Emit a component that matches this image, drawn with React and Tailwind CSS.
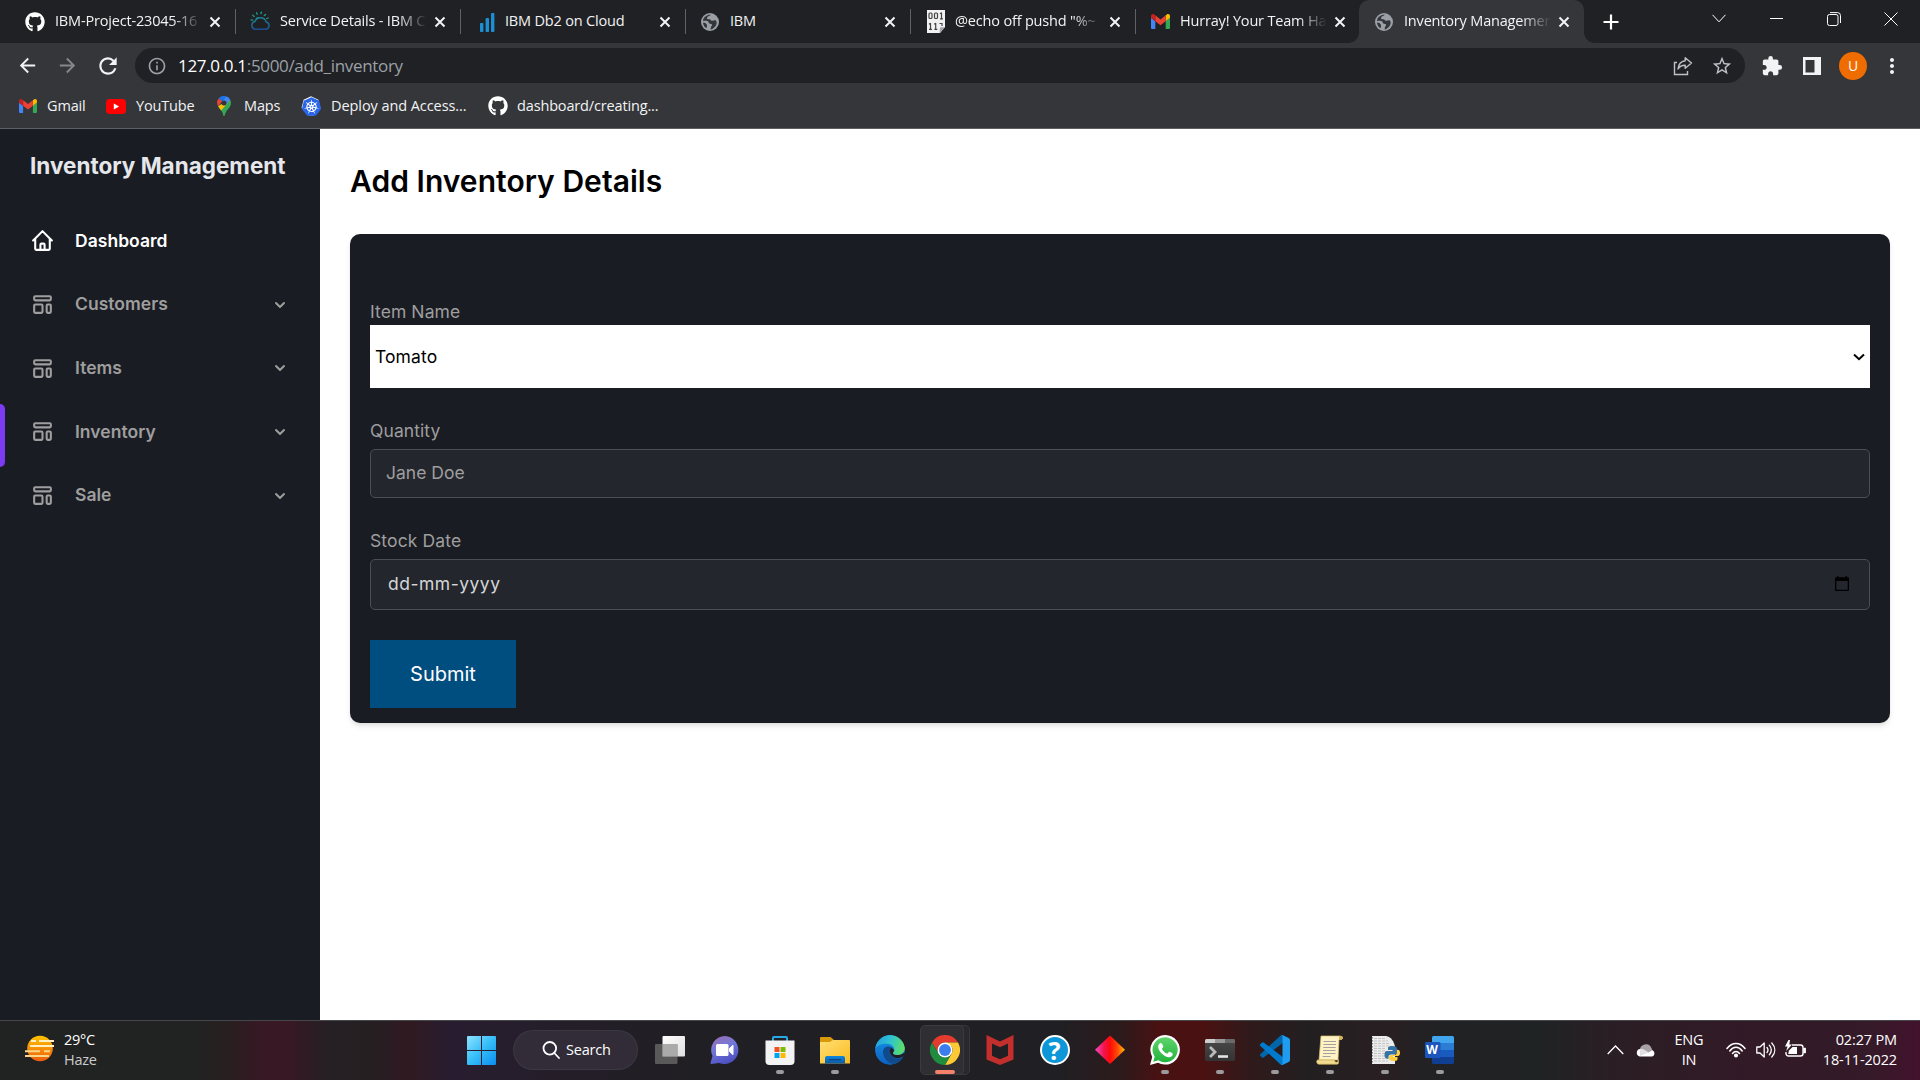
import React from "react";
import { FaGithub } from "react-icons/fa";
import { SiKubernetes } from "react-icons/si";
import { MdArrowBack, MdArrowForward, MdRefresh, MdInfoOutline, MdStarBorder, MdExtension, MdMoreVert } from "react-icons/md";

/* ---------- favicons and brand marks ---------- */

const GmailIcon = ({ className = "h-[19px] w-[19px]" }) => (
  <svg viewBox="52 42 88 66" className={className} preserveAspectRatio="none">
    <path fill="#4285f4" d="M58 108h14V74L52 59v43c0 3.32 2.69 6 6 6" />
    <path fill="#34a853" d="M120 108h14c3.32 0 6-2.69 6-6V59l-20 15" />
    <path fill="#fbbc04" d="M120 48v26l20-15v-8c0-7.42-8.47-11.65-14.4-7.2" />
    <path fill="#ea4335" d="M72 74V48l24 18 24-18v26L96 92" />
    <path fill="#c5221f" d="M52 51v8l20 15V48l-5.6-4.2c-5.94-4.45-14.4-.22-14.4 7.2" />
  </svg>
);

const CloudIcon = () => (
  <svg viewBox="0 0 20 22" className="h-[22px] w-5" fill="none">
    <defs>
      <linearGradient id="cloudLine" x1="0" y1="8" x2="0" y2="20" gradientUnits="userSpaceOnUse">
        <stop offset="0" stopColor="#1c7f90" />
        <stop offset="1" stopColor="#1c4690" />
      </linearGradient>
    </defs>
    <path d="M4.800 18.200h10.600a3.700 3.700 0 0 0 .8-7.300A6 6 0 0 0 5 10.400a4 4 0 0 0-.2 7.800Z" stroke="url(#cloudLine)" strokeWidth="1.500" />
    <path d="M5.900 8.200a3.900 3.900 0 0 1 2-2" stroke="#1b8f90" strokeWidth="1.100" />
    <path d="M1 8.800l1.700.3M2.800 4.300l1.300 1.200M6.600 1.600l.5 1.700M11.400 1l-.5 1.700M15.600 3.400l-1.300 1.200M18.200 7l-1.600.5" stroke="#1f9c8c" strokeWidth="1.300" strokeLinecap="round" />
  </svg>
);

const BarsIcon = () => (
  <svg viewBox="0 0 20 22" className="h-[22px] w-5">
    <g fill="#1c8fd3">
      <rect x="5" y="12" width="3.4" height="9" rx=".8" />
      <rect x="10.6" y="7" width="3.4" height="14" rx=".8" />
      <rect x="16" y="2" width="3.4" height="19" rx=".8" />
    </g>
  </svg>
);

const GlobeIcon = () => (
  <svg viewBox="0 0 20 20" className="h-5 w-5">
    <circle cx="10" cy="10" r="9" fill="#9aa0a6" />
    <path fill="#33363a" d="M11 2.8c-1.2 1.4-3.8 1.3-4 3.1-.1 1.3 1.4 1.4 2.7 1.3.9 0 1 1.4 2.2 1.5 1.7.2 3.3-1 4.3.2 1 1.3.3 4.2-1 5.5-1.4 1.4-2.8 3-4.6 3 .4-1.4 0-2.5 1-3.4.9-.9.6-2.1-.6-2.1-1.7 0-2.3-.9-2.6-2.2C8 8.600 5 9.400 3 8.800 3.300 5 7 2.500 11 2.800Z" />
    <path fill="#33363a" d="M3 10.600c2.200.3 3.900 1 4 3 .1 1-.3 2-.6 2.700C4.500 15.300 3.200 13 3 10.600Z" />
  </svg>
);

const BinaryIcon = () => (
  <svg viewBox="0 0 18 23" className="ml-px h-[23px] w-[18px]">
    <path fill="#f1f1f1" d="M0 0h18v17l-5 6H0Z" />
    <path fill="#9fa3a8" d="m12.500 23 .5-5.500 5-.5Z" />
    <g fill="none" stroke="#444" strokeWidth="1.200">
      <rect x="2" y="3" width="3" height="5.500" rx="1" />
      <rect x="7.500" y="3" width="3" height="5.500" rx="1" />
      <path d="M14.500 2.500V9M13 3.800l1.500-1M13 8.800h3M3.500 13v6.500M2 14.300l1.500-1M2 19.400h3M8.700 13v6.500M7.300 14.300l1.400-1M7.300 19.400h3M12.500 13.500h2.500v2.500" />
    </g>
  </svg>
);

const YouTubeIcon = () => (
  <svg viewBox="0 0 20 15" className="h-[15px] w-5">
    <rect width="20" height="15" rx="3.800" fill="#f00" />
    <path d="M7.800 4.500v6l5.300-3Z" fill="#fff" />
  </svg>
);

const MapsIcon = () => (
  <svg viewBox="0 0 14 20" className="h-[20px] w-[14px]">
    <path fill="#34a853" d="M1 10c1.500 3 4.500 4.500 5.200 9.200.2 1 1.400 1 1.600 0C8.700 14 14 12 14 7a7 7 0 0 0-.8-3.200Z" />
    <path fill="#fbbc04" d="M1.200 10.300C2 12 3.200 13.200 4.200 14.500L13 4.200 9.200 5.300Z" />
    <path fill="#4285f4" d="M9 .3A7 7 0 0 1 13.200 3.800L8.700 9.200 4.700 5.500Z" />
    <path fill="#1a73e8" d="M9.100.3A7 7 0 0 0 1.600 2.500l3.600 3Z" />
    <path fill="#ea4335" d="M1.600 2.500A7 7 0 0 0 1.200 10.300l4-5Z" />
    <circle cx="7" cy="7" r="2.500" fill="#35363a" />
  </svg>
);

const KubeIcon = () => (
  <span className="relative flex h-5 w-5 items-center justify-center">
    <svg viewBox="0 0 20 20" className="h-5 w-5">
      <path d="m10 .2 7.400 3.500 1.900 7.900-5.100 6.900-2 1H7.800l-2-1-5.100-6.900 1.900-7.900Z" fill="#fff" />
    </svg>
    <SiKubernetes className="absolute h-[19px] w-[19px] text-[#2a65e8]" />
  </span>
);

/* ---------- browser chrome ---------- */

const CloseX = () => (
  <svg viewBox="0 0 12 12" className="h-3 w-3 shrink-0">
    <path d="m1.500 1.500 9 9m0-9-9 9" stroke="#f1f3f4" strokeWidth="2" />
  </svg>
);

const tabs = [
  { icon: <FaGithub className="h-5 w-5 text-white" />, title: "IBM-Project-23045-16", fade: true },
  { icon: <CloudIcon />, title: "Service Details - IBM C", fade: true },
  { icon: <BarsIcon />, title: "IBM Db2 on Cloud" },
  { icon: <GlobeIcon />, title: "IBM" },
  { icon: <BinaryIcon />, title: '@echo off pushd "%~', fade: true },
  { icon: <GmailIcon className="h-[15px] w-[19px]" />, title: "Hurray! Your Team Ha", fade: true },
  { icon: <GlobeIcon />, title: "Inventory Managemen", fade: true, active: true },
];

const Tab = ({ icon, title, fade, active, divider }) => (
  <div className={"relative flex h-full w-[225px] shrink-0 items-center " + (active ? "-ml-px rounded-t-[10px] bg-[#35363a] pl-[15px]" : "pl-[15px]")}>
    <span className="flex w-5 shrink-0 items-center justify-center">{icon}</span>
    <span
      className={
        "mb-[2px] ml-[10px] w-[149px] whitespace-nowrap text-[14.5px] leading-5 tracking-[-0.18px] text-[#f1f3f4] " +
        (fade ? "[mask-image:linear-gradient(to_right,black_118px,transparent_147px)]" : "")
      }
    >
      {title}
    </span>
    <span className="ml-[5px] flex">
      <CloseX />
    </span>
    {divider && <span className="absolute -right-px top-[9px] h-[25px] w-px bg-[#5f6165]" />}
    {active && (
      <>
        <span className="absolute -left-[10px] bottom-0 h-[10px] w-[10px] bg-[radial-gradient(circle_at_0_0,transparent_9.500px,#35363a_10px)]" />
        <span className="absolute -right-[10px] bottom-0 h-[10px] w-[10px] bg-[radial-gradient(circle_at_100%_0,transparent_9.500px,#35363a_10px)]" />
      </>
    )}
  </div>
);

const TabStrip = () => (
  <div className="flex h-[43px] bg-[#202124] pl-[10px]">
    {tabs.map((t, i) => (
      <Tab key={i} {...t} divider={i < 5} />
    ))}
    <div className="flex w-[54px] items-center justify-center">
      <svg viewBox="0 0 16 16" className="h-4 w-4">
        <path d="M8 .5v15M.5 8h15" stroke="#fff" strokeWidth="2.200" />
      </svg>
    </div>
    <div className="ml-auto flex h-[37px] w-[230px] items-center text-white">
      <div className="flex w-[58px] justify-center">
        <svg viewBox="0 0 14 9" className="h-[9px] w-[14px]" fill="none" stroke="currentColor"><path d="m.5.8 6.500 7 6.500-7" /></svg>
      </div>
      <div className="flex w-[57px] justify-center"><span className="h-px w-[13px] bg-white" /></div>
      <div className="flex w-[57px] justify-center">
        <svg viewBox="0 0 14 14" className="h-[14px] w-[14px]" fill="none" stroke="currentColor">
          <rect x=".5" y="2.500" width="10.500" height="11" rx="2" />
          <path d="M3 .6h7.500a3 3 0 0 1 3 3V11" />
        </svg>
      </div>
      <div className="flex w-[58px] justify-center">
        <svg viewBox="0 0 14 14" className="h-[14px] w-[14px]" stroke="currentColor"><path d="m.5.5 13 13m0-13-13 13" /></svg>
      </div>
    </div>
  </div>
);

const ShareIcon = () => (
  <svg viewBox="0 0 20 20" className="h-5 w-5" fill="none" stroke="#bdc1c6" strokeWidth="1.400">
    <path d="M4 6.500H1.500v12h13V15" />
    <path d="M12.200 1.800 18.500 7l-6.300 5.200V9.300C8.600 9.300 6.500 10.500 5 13c.4-4.400 2.600-7.700 7.200-8.300Z" strokeLinejoin="round" />
  </svg>
);

const Toolbar = () => (
  <div className="flex h-[45px] items-center bg-[#35363a]">
    <div className="flex w-[135px] items-center pl-4 text-[#f1f3f4]">
      <MdArrowBack className="h-[23px] w-[23px]" />
      <MdArrowForward className="ml-[17px] h-[23px] w-[23px] text-[#85878a]" />
      <MdRefresh className="ml-[16px] h-[26px] w-[26px]" />
    </div>
    <div className="flex h-[35px] w-[1610px] items-center rounded-full bg-[#202124] pl-3 pr-3">
      <MdInfoOutline className="h-5 w-5 text-[#9aa0a6]" />
      <span className="ml-[11px] flex-1 whitespace-nowrap text-[17px] tracking-[-0.33px] text-[#9aa0a6]">
        <span className="text-white">127.0.0.1</span>:5000/add_inventory
      </span>
      <ShareIcon />
      <MdStarBorder className="ml-[18px] h-[22px] w-[22px] text-[#bdc1c6]" />
    </div>
    <MdExtension className="ml-[16px] h-[22px] w-[22px] text-[#f1f3f4]" />
    <svg viewBox="0 0 18 18" className="ml-[20px] h-[18px] w-[18px]">
      <path fill="#f1f3f4" fillRule="evenodd" d="M0 0h18v18H0ZM2.500 3v12.500h9V3Z" />
    </svg>
    <span className="ml-[18px] flex h-7 w-7 items-center justify-center rounded-full bg-[#ef6c00] text-[14px] text-white">U</span>
    <MdMoreVert className="ml-[13px] h-6 w-6 text-[#f1f3f4]" />
  </div>
);

const Bookmark = ({ icon, className, label }) => (
  <div className={"flex shrink-0 items-center whitespace-nowrap " + className}>
    {icon}
    {label}
  </div>
);

const Bookmarks = () => (
  <div className="flex h-[41px] items-center border-b border-[#5f6063] bg-[#35363a] pb-1 pl-[19px] text-[14.500px] tracking-[-0.15px] text-[#f1f3f4]">
    <Bookmark className="w-[87px] gap-[10px]" icon={<GmailIcon className="h-[14px] w-[18px]" />} label="Gmail" />
    <Bookmark className="w-[111px] gap-[10px]" icon={<YouTubeIcon />} label="YouTube" />
    <Bookmark className="w-[84px] gap-[13px]" icon={<MapsIcon />} label="Maps" />
    <Bookmark className="w-[187px] gap-[10px] tracking-[-0.07px]" icon={<KubeIcon />} label="Deploy and Access..." />
    <Bookmark className="gap-[9px]" icon={<FaGithub className="h-5 w-5 text-white" />} label="dashboard/creating..." />
  </div>
);

/* ---------- page ---------- */

const Outline = ({ d, className }) => (
  <svg viewBox="0 0 24 24" className={className} fill="none" stroke="currentColor" strokeWidth="2" strokeLinecap="round" strokeLinejoin="round">
    <path d={d} />
  </svg>
);

const HOME = "M3 12l2-2m0 0l7-7 7 7M5 10v10a1 1 0 001 1h3m10-11l2 2m-2-2v10a1 1 0 01-1 1h-3m-6 0a1 1 0 001-1v-4a1 1 0 011-1h2a1 1 0 011 1v4a1 1 0 001 1m-6 0h6";
const LAYOUT = "M4 5a1 1 0 011-1h14a1 1 0 011 1v2a1 1 0 01-1 1H5a1 1 0 01-1-1V5zM4 13a1 1 0 011-1h6a1 1 0 011 1v6a1 1 0 01-1 1H5a1 1 0 01-1-1v-6zM16 13a1 1 0 011-1h2a1 1 0 011 1v6a1 1 0 01-1 1h-2a1 1 0 01-1-1v-6z";

const MenuItem = ({ label, current }) => (
  <li className="relative flex h-[63.700px] items-center px-[30px] text-[#9e9e9e]">
    {current && <span className="absolute left-0 top-[4px] h-[63px] w-[5px] rounded-r-[5px] bg-[#7e3af2]" />}
    <Outline d={LAYOUT} className="h-[25px] w-[25px]" />
    <span className="ml-5 flex-1">{label}</span>
    <svg viewBox="0 0 20 20" className="h-5 w-5" fill="currentColor">
      <path fillRule="evenodd" clipRule="evenodd" d="M5.293 7.293a1 1 0 011.414 0L10 10.586l3.293-3.293a1 1 0 111.414 1.414l-4 4a1 1 0 01-1.414 0l-4-4a1 1 0 010-1.414z" />
    </svg>
  </li>
);

const Sidebar = () => (
  <aside className="w-[320px] shrink-0 bg-[#1a1c23] text-[17.500px] font-semibold tracking-[0.03px]">
    <div className="ml-[30px] pt-[19px] text-[22.500px] font-bold leading-[35px] tracking-[0px] text-[#e5e7eb]">Inventory Management</div>
    <ul className="mt-[26px]">
      <li className="flex h-[63.700px] items-center px-[30px] text-[#fff]">
        <Outline d={HOME} className="h-[25px] w-[25px]" />
        <span className="ml-5">Dashboard</span>
      </li>
      <MenuItem label="Customers" />
      <MenuItem label="Items" />
      <MenuItem label="Inventory" current />
      <MenuItem label="Sale" />
    </ul>
  </aside>
);

const Main = () => (
  <main className="flex-1 bg-white px-[30px]">
    <h2 className="pt-[33px] text-[30px] font-semibold leading-[38px] tracking-[0.04px] text-black">Add Inventory Details</h2>
    <div className="mt-[34px] h-[489px] rounded-[10px] bg-[#1a1c23] px-5 pt-[65px] text-[17.500px] leading-[25px] text-[#9e9e9e] shadow-md">
      <div className="tracking-[0.08px]">Item Name</div>
      <div className="mt-px flex h-[63px] items-center justify-between bg-white pl-[5px] pr-[5px] tracking-[0.1px] text-black">
        Tomato
        <svg viewBox="0 0 12 8" className="h-2 w-3" fill="none" stroke="#000" strokeWidth="2"><path d="m1 1.500 5 4.700 5-4.700" /></svg>
      </div>
      <div className="mt-[30px] tracking-[0.08px]">Quantity</div>
      <div className="mt-[6px] flex h-[49px] items-center rounded-[5px] border border-[#4c4f52] bg-[#24262d] pl-[15px] pb-[2px]">Jane Doe</div>
      <div className="mt-[30px] tracking-[0.12px]">Stock Date</div>
      <div className="mt-[6px] flex h-[51px] items-center justify-between rounded-[5px] border border-[#4c4f52] bg-[#24262d] pl-[17px] pr-[20px] pb-[2px] text-[#d5d6d7]">
        <span className="tracking-[0.5px]">dd-mm-yyyy</span>
        <svg viewBox="0 0 14 15" className="h-[15px] w-[14px]" fill="#000">
          <path fillRule="evenodd" d="M2 0h1.500v1.200h7V0H12v1.200h1a1 1 0 0 1 1 1V14a1 1 0 0 1-1 1H1a1 1 0 0 1-1-1V2.200a1 1 0 0 1 1-1h1ZM1.300 5v8.700h11.400V5Z" />
        </svg>
      </div>
      <button className="mt-[30px] flex h-[68px] w-[146px] items-center justify-center bg-[#004d80] text-[20px] text-white">Submit</button>
    </div>
  </main>
);

/* ---------- taskbar ---------- */

const Sun = () => (
  <svg viewBox="0 0 30 30" className="h-[30px] w-[30px]">
    <defs>
      <linearGradient id="sun" x1="0" y1="0" x2="0" y2="1"><stop offset="0" stopColor="#ffc400" /><stop offset="1" stopColor="#ee5a0c" /></linearGradient>
    </defs>
    <circle cx="15" cy="13.500" r="12.800" fill="url(#sun)" />
    <g strokeWidth="2" fill="none">
      <path stroke="#fff1c4" d="M6 6h5M14 6h15M5 11h24" />
      <path stroke="#f8d68a" d="M0 16.300h15M19 16.300h6M0 21.100h24" />
    </g>
  </svg>
);

const WindowsLogo = () => (
  <svg viewBox="0 0 29 29" className="h-[29px] w-[29px]">
    <defs>
      <linearGradient id="win" x1="0" y1="0" x2="1" y2="1"><stop offset="0" stopColor="#8fe3ff" /><stop offset=".5" stopColor="#35bdf8" /><stop offset="1" stopColor="#0a8df0" /></linearGradient>
    </defs>
    <path fill="url(#win)" d="M1 0h13v14H0V1a1 1 0 0 1 1-1ZM15 0h13a1 1 0 0 1 1 1v13H15ZM0 15h14v14H1a1 1 0 0 1-1-1ZM15 15h14v13a1 1 0 0 1-1 1H15Z" />
  </svg>
);

const TaskView = () => (
  <svg viewBox="0 0 30 30" className="h-[30px] w-[30px]">
    <defs><linearGradient id="tv" x1="0" y1="0" x2="1" y2="1"><stop offset="0" stopColor="#fff" /><stop offset="1" stopColor="#ddd" /></linearGradient></defs>
    <rect x="7.500" y="1" width="22.500" height="20.500" rx="1" fill="url(#tv)" />
    <rect x="0" y="9" width="22.500" height="20" rx="1" fill="#686868" fillOpacity=".8" />
    <path d="M7.500 9h15v12.500h-15Z" fill="#aaa" />
  </svg>
);

const Chat = () => (
  <svg viewBox="0 0 30 30" className="h-[30px] w-[30px]">
    <defs><linearGradient id="chat" x1="0" y1="0" x2=".4" y2="1"><stop offset="0" stopColor="#a06db0" /><stop offset=".5" stopColor="#7278d8" /><stop offset="1" stopColor="#5052c4" /></linearGradient></defs>
    <path fill="url(#chat)" d="M15 1a14 14 0 1 1-5.800 27L1.500 29c-.9.100-1.200-.5-.9-1.200L2.500 21A14 14 0 0 1 15 1Z" />
    <rect x="6" y="9" width="12.500" height="12" rx="1.500" fill="#fff" />
    <path d="m19.500 13.500 3.500-3.200v9.400l-3.500-3.200Z" fill="#fff" stroke="#fff" strokeLinejoin="round" />
  </svg>
);

const Store = () => (
  <svg viewBox="0 0 30 30" className="h-[30px] w-[30px]">
    <path d="M8 6V3a1 1 0 0 1 1-1h12a1 1 0 0 1 1 1v3" fill="none" stroke="#29a8e6" strokeWidth="2" />
    <path d="M.5 5.500h29V26a4 4 0 0 1-4 4h-21a4 4 0 0 1-4-4Z" fill="#f3f3f3" />
    <path fill="#f25022" d="M9.500 12h5v5h-5Z" /><path fill="#7fba00" d="M15.500 12h5v5h-5Z" />
    <path fill="#00a4ef" d="M9.500 18h5v5h-5Z" /><path fill="#ffb900" d="M15.500 18h5v5h-5Z" />
  </svg>
);

const Folder = () => (
  <svg viewBox="0 0 30 30" className="h-[30px] w-[30px]">
    <defs>
      <linearGradient id="fold" x1="0" y1="0" x2="1" y2="1"><stop offset="0" stopColor="#ffdf75" /><stop offset="1" stopColor="#fbbb1e" /></linearGradient>
      <linearGradient id="foldB" x1="0" y1="0" x2="0" y2="1"><stop offset="0" stopColor="#0f86dc" /><stop offset="1" stopColor="#0c5ca8" /></linearGradient>
    </defs>
    <path d="M0 3a1 1 0 0 1 1-1h9.500L14 5v5H0Z" fill="#d89a0b" />
    <path d="M0 7h10l3-2h16a1 1 0 0 1 1 1v22.500H0Z" fill="url(#fold)" />
    <path d="M5 28.500V23a2 2 0 0 1 2-2h16a2 2 0 0 1 2 2v5.500Z" fill="url(#foldB)" />
    <path d="M9 24.700h12" stroke="#0a4583" strokeWidth="1.300" />
  </svg>
);

const Edge = () => (
  <svg viewBox="0 0 30 30" className="h-[30px] w-[30px]">
    <defs>
      <linearGradient id="eTop" x1="0" y1=".3" x2="1" y2=".5"><stop offset="0" stopColor="#229ee0" /><stop offset=".5" stopColor="#2fc3cf" /><stop offset="1" stopColor="#5fe063" /></linearGradient>
      <linearGradient id="eBody" x1="0" y1="0" x2="0" y2="1"><stop offset="0" stopColor="#1593e6" /><stop offset="1" stopColor="#0d5fbf" /></linearGradient>
      <clipPath id="eClip"><circle cx="15" cy="15" r="15" /></clipPath>
    </defs>
    <g clipPath="url(#eClip)">
      <circle cx="15" cy="15" r="15" fill="url(#eBody)" />
      <path d="M8 17c0 6 5 11.500 11 12 4-.5 7.500-3 9.500-7-4.500 2.500-9 2-11.500-.5-2.500-2.400-2.800-6-.5-9C11.500 10 8 13 8 17Z" fill="#114a8b" />
      <path d="M16.500 12.500C14 15 14.500 19 17.500 21.500c3 2.200 7 2 10 .5 1-.5 1.500 0 1 1L31 24V17l-3 1.500c-3 1.800-8 2-9 .5-.6-1 .5-1.500.5-3.500Z" fill="#211f25" />
      <path d="M0 14C1 6 7.500 0 15 0c8.500 0 15 6 15 12.500 0 4.500-3.500 7.500-7.500 7.500-3.500 0-5-1.200-4.500-2.200.4-.8 1.300-1.300 1.300-3 0-3-3-6-7.800-6C6.500 8.800 2 10.500 0 14Z" fill="url(#eTop)" />
    </g>
  </svg>
);

const Chrome = () => (
  <svg viewBox="0 0 48 48" className="h-[30px] w-[30px]">
    <path fill="#e33b2e" d="M3.200 12A24 24 0 0 1 44.800 12H24a12 12 0 0 0-10.400 18Z" />
    <path fill="#fcc934" d="M44.800 12A24 24 0 0 1 24 48l10.400-18A12 12 0 0 0 34.400 18L24 12Z" />
    <path fill="#1e8e3e" d="M3.200 12 13.600 30A12 12 0 0 0 34.400 30L24 48A24 24 0 0 1 3.200 12Z" />
    <circle cx="24" cy="24" r="12" fill="#fff" />
    <circle cx="24" cy="24" r="9.500" fill="#3b7ded" />
  </svg>
);

const McAfee = () => (
  <svg viewBox="0 0 30 30" className="h-[30px] w-[30px]">
    <path fill="#c22f2d" fillRule="evenodd" d="M1.500 0 15 6.500 28.500 0v24.500L15 30 1.500 24.500ZM7 8.500v12.300l8 3.400 8-3.400V8.500l-8 3.800Z" />
  </svg>
);

const Help = () => (
  <span className="flex h-[30px] w-[30px] items-center justify-center rounded-full border-2 border-white bg-[#0d96d8] font-['Noto_Sans'] text-[25px] font-bold leading-none text-white">?</span>
);

const Diamond = () => (
  <svg viewBox="0 0 30 30" className="h-[30px] w-[30px]">
    <defs><linearGradient id="dia"><stop offset="0" stopColor="#f04dc0" /><stop offset=".3" stopColor="#f31350" /><stop offset=".5" stopColor="#ff0909" /><stop offset=".75" stopColor="#ff4b09" /><stop offset="1" stopColor="#ffbd00" /></linearGradient></defs>
    <path d="m15 .5 15 14.300L15 29 0 14.800Z" fill="url(#dia)" />
  </svg>
);

const WhatsApp = () => (
  <svg viewBox="0 0 30 30" className="h-[30px] w-[30px]">
    <defs><linearGradient id="wa" x1="0" y1="0" x2="0" y2="1"><stop offset="0" stopColor="#5fd46c" /><stop offset="1" stopColor="#22b33c" /></linearGradient></defs>
    <path fill="#fff" d="M15.200 0A14.800 14.800 0 1 1 8 27.800L0 30l2.200-8A14.800 14.800 0 0 1 15.200 0Z" />
    <path fill="url(#wa)" d="M15.200 2.300a12.500 12.500 0 1 1-6.800 23L3.200 26.700l1.500-5A12.500 12.500 0 0 1 15.200 2.300Z" />
    <path fill="#fff" d="M10.700 8c-.7 0-2.700 1.200-2.500 4 .3 4.500 6 10 10.800 10.300 2 .1 3.800-1.500 3.800-3.300 0-.6-3.300-2.400-3.900-2.100-.7.300-1.200 1.900-1.900 1.700-2-.6-4.200-2.800-5-4.700-.3-.7 1.200-1.300 1.300-2.200C13.400 11 12 8 10.700 8Z" />
  </svg>
);

const Terminal = () => (
  <svg viewBox="0 0 30 30" className="h-[30px] w-[30px]">
    <defs><linearGradient id="term" x1="0" y1="0" x2="0" y2="1"><stop offset="0" stopColor="#4a4a4a" /><stop offset="1" stopColor="#333" /></linearGradient></defs>
    <rect y="4" width="30" height="22" rx="1.500" fill="url(#term)" />
    <path fill="#ccc" d="M0 5.500A1.500 1.500 0 0 1 1.500 4H10v4H0Z" /><path fill="#999" d="M10 4h10v4H10Z" /><path fill="#6a6a6a" d="M20 4h8.500A1.500 1.500 0 0 1 30 5.500V8H20Z" />
    <path d="m5 12 5 5-5 5" fill="none" stroke="#bbb" strokeWidth="2.800" /><path d="M13 21.500h10" stroke="#e3e3e3" strokeWidth="2.600" />
  </svg>
);

const VsCode = () => (
  <svg viewBox="0 0 100 100" className="h-[30px] w-[30px]">
    <path fill="#0065a9" d="M96.500 10.700 75.900.8a6.200 6.200 0 0 0-7.100 1.200L1.300 63.500a4.200 4.200 0 0 0 0 6.200l5.500 5a4.200 4.200 0 0 0 5.400.2L93.300 13.400c2.700-2.100 6.700-.1 6.700 3.300v-.2a6.200 6.200 0 0 0-3.500-5.800Z" />
    <path fill="#007acc" d="m96.500 89.300-20.600 9.900a6.200 6.200 0 0 1-7.100-1.200L1.300 36.500a4.200 4.200 0 0 1 0-6.200l5.500-5a4.200 4.200 0 0 1 5.400-.2l81.100 61.500c2.700 2.100 6.700.1 6.700-3.300v.2a6.200 6.200 0 0 1-3.500 5.800Z" />
    <path fill="#1f9cf0" d="M75.900 99.100a6.200 6.200 0 0 1-7.100-1.200c2.300 2.300 6.200.7 6.200-2.600V4.700c0-3.300-3.900-4.900-6.200-2.600a6.200 6.200 0 0 1 7.100-1.200l20.600 9.900a6.200 6.200 0 0 1 3.500 5.600v67.200a6.200 6.200 0 0 1-3.500 5.600Z" />
  </svg>
);

const Scroll = () => (
  <svg viewBox="0 0 30 30" className="h-[30px] w-[30px]">
    <path d="M6 1h19c3 0 3 3.500 1 3.500h-2L23 25H4Z" fill="#fff2c4" stroke="#d7bd6c" strokeWidth=".7" />
    <path d="M24 4.500V2c0-1.500 4-1.500 4 .5 0 1.500-1 2-2 2Z" fill="#d3b45b" />
    <path d="M2.500 25h17c0 3 4 3 4-.5V28c0 .8-.8 1.200-1.500 1.200H4c-2.500 0-3-3.500-1.500-4.200Z" fill="#f1dc92" stroke="#c9aa4f" strokeWidth=".7" />
    <path d="M8.500 6.500H21M8.500 9.500H21M8.200 12.500h12.500M8 15.500h12.500M8 18.500h12.500M7.500 21.500h8" stroke="#a3a0a0" />
  </svg>
);

const PyFile = () => (
  <svg viewBox="0 0 30 30" className="h-[30px] w-[30px]">
    <path d="M2 1h14c5 1 8 5 9 11v17H2Z" fill="#ececec" />
    <path d="M4 3.500h12M4 6h14M4 8.500h16M4 11h16M4 13.500h12M4 16h11M4 18.500h11M4 21h11M4 23.500h12M4 26h14" stroke="#c3c3c3" strokeWidth="1.100" strokeDasharray="3 1" />
    <path d="M2.500 2v27" stroke="#888" strokeDasharray="1.500 1.500" />
    <path fill="#3672a4" d="M22 11c-3.500 0-4 1-4 2.500V15h4.500v1H17c-2 0-2.500 2-2.500 4s1 3.800 2.500 3.800h1.500V22c0-1.500 1-2.500 2.500-2.500h4c1.200 0 2-1 2-2v-4c0-1.500-1.500-2.500-5-2.500Z" />
    <path fill="#ffcf3e" d="M23.500 26c3.500 0 4-1 4-2.300V22H23v-1h4.800c1.700 0 2.200-1.500 2.200-3.200 0-1.800-.8-3-2.300-3H27V17c0 1.800-1 3-2.500 3H21c-1.200 0-2 .8-2 2v1.600c0 1.600 1.500 2.400 4.500 2.400Z" />
  </svg>
);

const Word = () => (
  <span className="relative flex h-[30px] w-[30px]">
    <svg viewBox="0 0 30 30" className="h-[30px] w-[30px]">
      <path fill="#41a5ee" d="M7 2.500A1.500 1.500 0 0 1 8.500 1h19A1.500 1.500 0 0 1 29 2.500V8H7Z" /><path fill="#2b7cd3" d="M7 8h22v7H7Z" /><path fill="#185abd" d="M7 15h22v7H7Z" /><path fill="#103f91" d="M7 22h22v5.500a1.500 1.500 0 0 1-1.500 1.500h-19A1.500 1.500 0 0 1 7 27.500Z" />
      <rect y="7" width="15.500" height="16" rx="1.200" fill="#1a56bd" />
    </svg>
    <span className="absolute left-0 top-[7px] flex h-4 w-[15px] items-center justify-center text-[12px] font-bold leading-none text-white">W</span>
  </span>
);

const apps = [
  { icon: <TaskView /> }, { icon: <Chat /> }, { icon: <Store />, open: true }, { icon: <Folder />, open: true }, { icon: <Edge /> },
  { icon: <Chrome />, focused: true }, { icon: <McAfee /> }, { icon: <Help /> }, { icon: <Diamond /> }, { icon: <WhatsApp />, open: true },
  { icon: <Terminal />, open: true }, { icon: <VsCode />, open: true }, { icon: <Scroll />, open: true }, { icon: <PyFile />, open: true }, { icon: <Word />, open: true },
];

const TaskApp = ({ icon, open, focused }) => (
  <div className="relative flex h-full w-[55px] shrink-0 items-center justify-center">
    {focused && (
      <>
        <span className="absolute left-[8px] top-[4px] h-[50px] w-[45px] rounded-[5px] border border-[#38373c] bg-[#29282d]" />
        <span className="absolute left-[3px] top-[4px] h-[50px] w-[44px] rounded-[5px] border border-[#3b3a3f] bg-[#2f2e33]" />
      </>
    )}
    <span className="relative mb-px flex">{icon}</span>
    {open && <span className="absolute bottom-[6px] h-1 w-2 rounded-full bg-[#9b9a9c]" />}
    {focused && <span className="absolute bottom-[6px] h-1 w-5 rounded-full bg-[#f4826a]" />}
  </div>
);

const Tray = () => (
  <div className="ml-auto flex h-full items-center pr-6 text-[14.500px] leading-5 text-white">
    <svg viewBox="0 0 17 10" className="mb-[2px] h-[10px] w-[17px]" fill="none" stroke="#fff" strokeWidth="1.300"><path d="m.7 9 7.800-8 7.800 8" /></svg>
    <svg viewBox="0 0 20 14" className="mb-[2px] ml-3 h-[14px] w-5">
      <path d="M4 8a6 6 0 0 1 11.500-3L17 9l-10 2Z" fill="#a7a1a5" />
      <path d="M3.800 13.500a3.800 3.800 0 0 1 .4-7.500c1.500 0 2.500.5 4 1.500l4.200 2 4-2.200a3.300 3.300 0 0 1-.2 6.200Z" fill="#fff" />
      <path d="M4 6c3-.8 5 1.500 8.500 3.500L4 13Z" fill="#e1dfe1" />
    </svg>
    <div className="mb-[2px] ml-4 w-[34px] text-center tracking-[-0.3px]">
      <div>ENG</div>
      <div>IN</div>
    </div>
    <svg viewBox="0 0 20 16" className="mb-[2px] ml-5 h-4 w-5" fill="none" stroke="#fff" strokeWidth="1.500" strokeLinecap="round">
      <path d="M1 6.500C6-.3 14-.3 19 6.500M3.800 9C7.500 4 12.500 4 16.200 9M6.500 11.500c2-2.700 5-2.700 7 0" /><circle cx="10" cy="13.500" r="1.300" fill="#fff" />
    </svg>
    <svg viewBox="0 0 20 18" className="mb-[2px] ml-[10px] h-[18px] w-5" fill="none" stroke="#fff" strokeWidth="1.300" strokeLinecap="round" strokeLinejoin="round">
      <path d="M.8 6v6H4l4.200 4V2L4 6ZM11 6.500c1.200 1.500 1.200 3.500 0 5M13.300 4.200c2.500 3 2.500 6.600 0 9.600M15.800 2c4 4.300 4 9.700 0 14" />
    </svg>
    <svg viewBox="0 0 21 18" className="mb-[3px] ml-[9px] h-[18px] w-[21px]" fill="none" stroke="#fff" strokeWidth="1.400">
      <path d="M7 5h8.500A2.500 2.500 0 0 1 18 7.500v6a2.500 2.500 0 0 1-2.500 2.500H3.500A2.500 2.500 0 0 1 1 13.500V12" />
      <path d="M4 10.500 7.500 7H12v7H3.200Z" fill="#fff" stroke="none" /><path d="M19 8.500h1.200v4H19Z" fill="#fff" />
      <path d="M3.500 0 0 6.500h2.500L1.200 11 7 4.500H4.300L5 0Z" fill="#fff" stroke="none" />
    </svg>
    <div className="mb-[2px] ml-[17px] mr-[-1px] whitespace-nowrap text-right tracking-[-0.15px]">
      <div>02:27 PM</div>
      <div>18-11-2022</div>
    </div>
  </div>
);

const Taskbar = () => (
  <footer className="flex h-[60px] items-center border-t border-[#46474b] bg-[linear-gradient(90deg,#212323_0px,#212323_190px,#27201f_225px,#371824_262px,#371824_290px,#252023_330px,#251f22_375px,#2f1a22_400px,#2f1a22_415px,#281d30_450px,#241e29_560px,#201f23_700px,#201f23_1060px,#2c1a1c_1120px,#4a1112_1160px,#4a1112_1205px,#301a1b_1250px,#221f21_1310px,#291f22_1380px,#212224_1440px,#202324_1540px,#2b1e24_1620px,#321a27_1750px,#321a27_1810px,#351a29_1870px,#42122d_1920px)]">
    <div className="mb-[2px] flex w-[467px] items-center pl-[25px] text-[14.500px] leading-5 text-white">
      <Sun />
      <div className="ml-[9px] tracking-[-0.3px]">
        <div>29°C</div>
        <div className="text-[#cbcbcb]">Haze</div>
      </div>
    </div>
    <WindowsLogo />
    <div className="mb-px ml-[17px] flex h-10 w-[125px] items-center rounded-full border border-white/5 bg-[#312c38] pl-[28px] text-[14.500px] tracking-[-0.22px] text-white">
      <svg viewBox="0 0 18 18" className="h-[18px] w-[18px]" fill="none" stroke="#fff" strokeWidth="1.800" strokeLinecap="round"><circle cx="7.800" cy="7.300" r="6.300" /><path d="m12.300 12 4.700 5" /></svg>
      <span className="ml-[6px]">Search</span>
    </div>
    <div className="ml-1 flex h-full">
      {apps.map((a, i) => (
        <TaskApp key={i} {...a} />
      ))}
    </div>
    <Tray />
  </footer>
);

export default function App() {
  return (
    <div className="flex h-[1080px] w-[1920px] flex-col overflow-hidden font-['Open_Sans','Noto_Sans',sans-serif]">
      <TabStrip />
      <Toolbar />
      <Bookmarks />
      <div className="flex flex-1 font-['Inter',sans-serif]">
        <Sidebar />
        <Main />
      </div>
      <Taskbar />
    </div>
  );
}
